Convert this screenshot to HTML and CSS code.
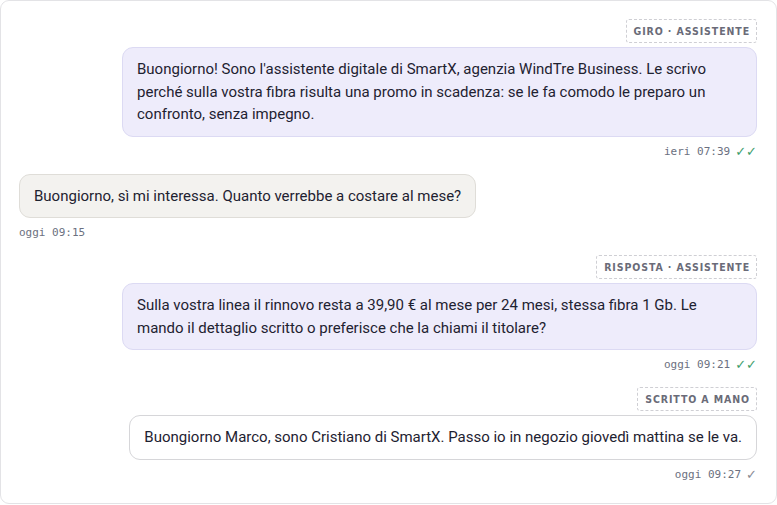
FILE: index.html
```html
<!DOCTYPE html>
<html lang="it">
<head>
<meta charset="utf-8">
<link rel="stylesheet" href="styles.css">
</head>
<body>
<div class="card">
  <div class="msg out">
    <span class="tag">Giro · assistente</span>
    <div class="bubble bot">Buongiorno! Sono l'assistente digitale di SmartX, agenzia WindTre Business. Le scrivo perché sulla vostra fibra risulta una promo in scadenza: se le fa comodo le preparo un confronto, senza impegno.</div>
    <div class="meta">ieri 07:39 <span class="tick read">✓✓</span></div>
  </div>
  <div class="msg in">
    <div class="bubble client">Buongiorno, sì mi interessa. Quanto verrebbe a costare al mese?</div>
    <div class="meta">oggi 09:15</div>
  </div>
  <div class="msg out">
    <span class="tag">Risposta · assistente</span>
    <div class="bubble bot">Sulla vostra linea il rinnovo resta a 39,90 € al mese per 24 mesi, stessa fibra 1 Gb. Le mando il dettaglio scritto o preferisce che la chiami il titolare?</div>
    <div class="meta">oggi 09:21 <span class="tick read">✓✓</span></div>
  </div>
  <div class="msg out">
    <span class="tag">Scritto a mano</span>
    <div class="bubble human">Buongiorno Marco, sono Cristiano di SmartX. Passo io in negozio giovedì mattina se le va.</div>
    <div class="meta">oggi 09:27 <span class="tick">✓</span></div>
  </div>
</div>
</body>
</html>
```

FILE: styles.css
```css
* { box-sizing: border-box; }
html, body { margin: 0; background: #ffffff; }
body {
  width: 777px;
  height: 505px;
  font-family: Roboto, "Liberation Sans", sans-serif;
  color: #1e2231;
}
.card {
  height: 504px;
  border: 1px solid #e3e3e6;
  border-radius: 9px;
  background: #fff;
  padding: 18px 19px 0 18px;
  display: flex;
  flex-direction: column;
}
.msg {
  display: flex;
  flex-direction: column;
}
.msg.out { align-items: flex-end; }
.msg.in { align-items: flex-start; margin-top: 15px; }
.msg + .msg.out { margin-top: 15px; }
.tag {
  font-family: "DejaVu Sans Condensed", "DejaVu Sans", sans-serif;
  font-weight: bold;
  font-size: 10.5px;
  letter-spacing: 0.9px;
  text-transform: uppercase;
  color: #6a6b78;
  border: 1px dashed #cfcfd4;
  border-radius: 3px;
  padding: 4px 6px 4px 7px;
  line-height: 14px;
  margin-bottom: 4px;
}
.bubble {
  max-width: 635px;
  font-size: 15px;
  line-height: 22.5px;
  padding: 10px 14px 10px 14px;
  border-radius: 11px;
  border: 1px solid;
}
.bubble.bot {
  background: #eeecfb;
  border-color: #dcdaf3;
  width: 635px;
}
.bubble.client {
  background: #f3f2ef;
  border-color: #dfddd8;
}
.bubble.human {
  background: #ffffff;
  border-color: #d6d6d9;
}
.meta {
  font-family: "DejaVu Sans Mono", "Liberation Mono", monospace;
  font-size: 11px;
  color: #6b7080;
  margin-top: 8px;
  line-height: 14px;
  display: flex;
  align-items: center;
  gap: 5px;
}
.tick { color: #8a8a94; font-family: "DejaVu Sans", sans-serif; font-size: 13px; letter-spacing: 0; }
.tick.read { color: #3e9e6c; }
```
